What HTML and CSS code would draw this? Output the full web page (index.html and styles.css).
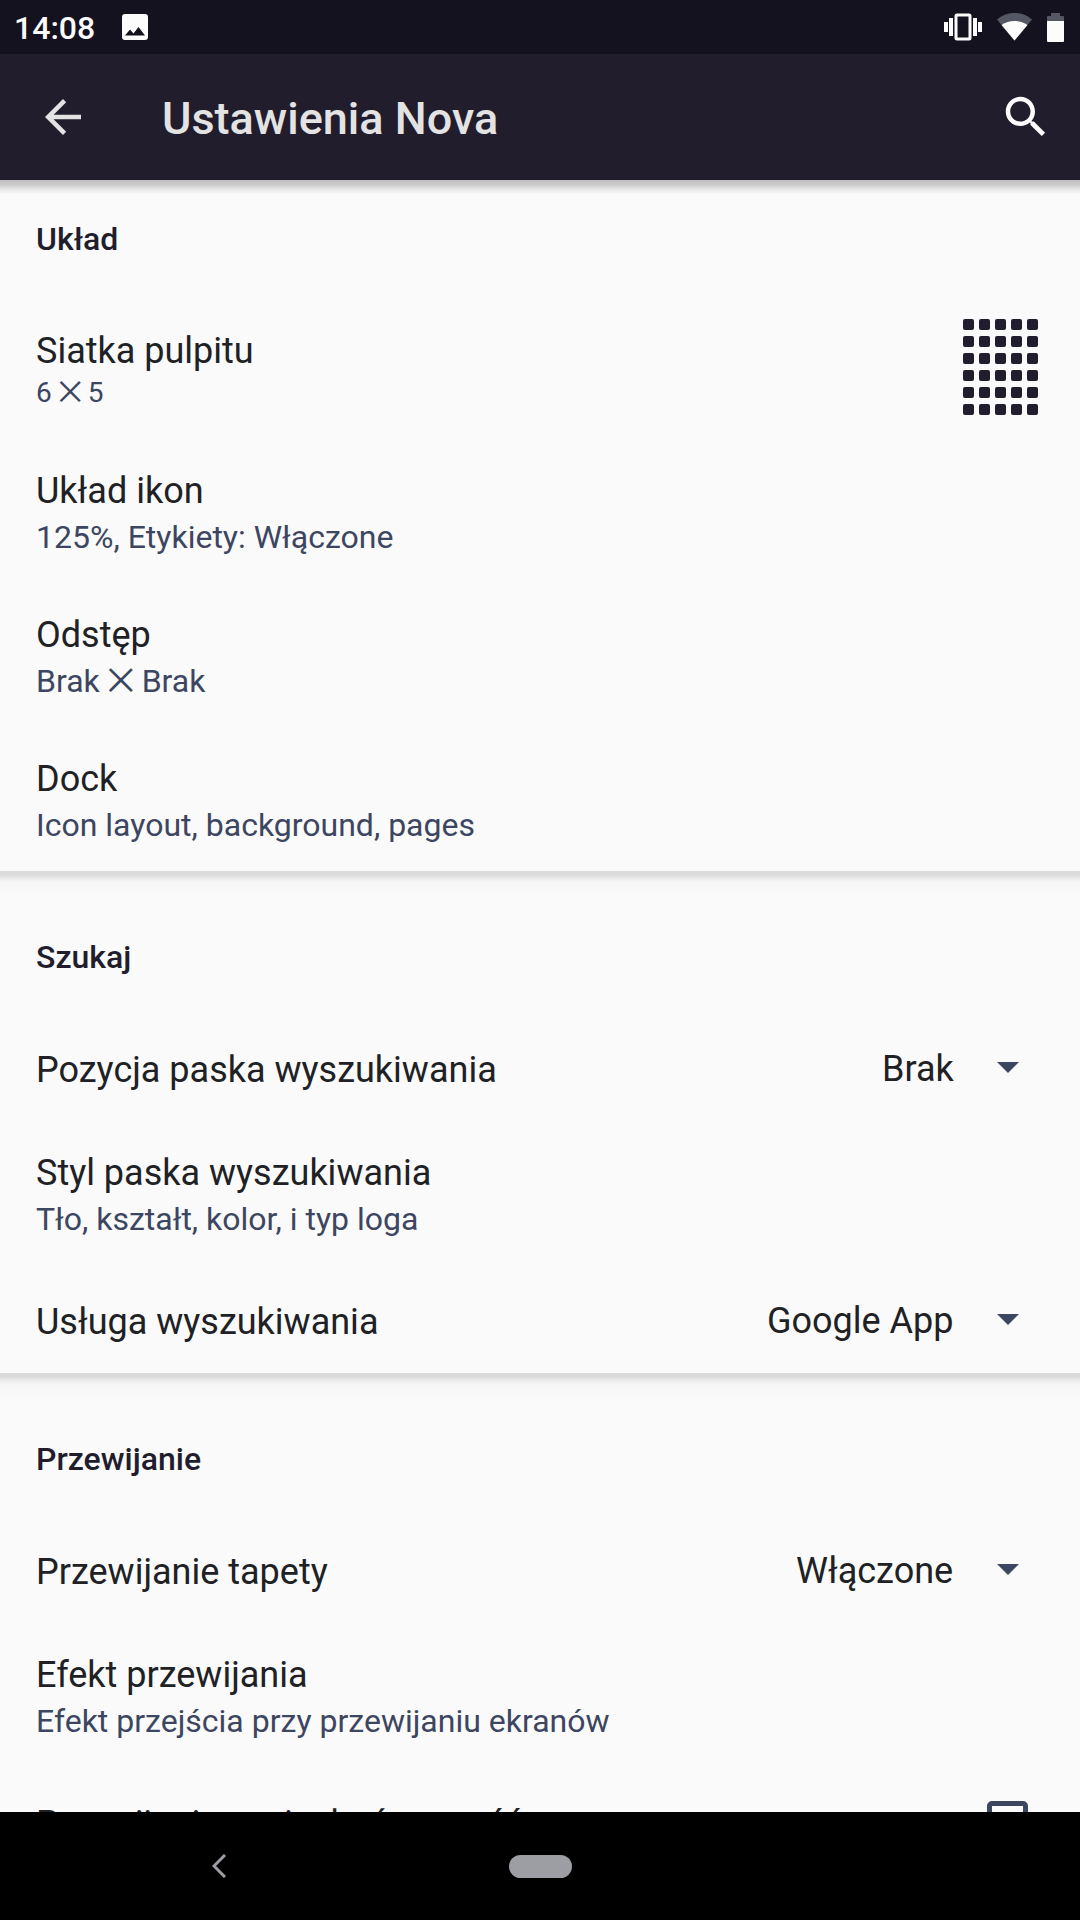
FILE: index.html
```html
<!DOCTYPE html>
<html lang="pl">
    <head>
        <meta charset="UTF-8">
        <meta name="viewport" content="width=device-width, initial-scale=1">
        <title>Ustawienia Nova</title>
        <link rel="stylesheet" href="styles.css">
    </head>

    <body>
        <div class="page">
            <div class="status">
                <span class="time">14:08</span>
                <svg class="picture" width="26" height="26" viewBox="0 0 26 26">
                    <path fill="#fcfcfc" fill-rule="evenodd" d="M3 0h20a3 3 0 0 1 3 3v20a3 3 0 0 1-3 3H3a3 3 0 0 1-3-3V3a3 3 0 0 1 3-3zM3 21.500h20l-6.500-8.500-5 6.500-3.500-4z"/>
                </svg>
                <div class="status_icons">
                    <svg width="38" height="28" viewBox="0 0 38 28" fill="#fcfcfc">
                        <rect x="0" y="9" width="4" height="10"/>
                        <rect x="5" y="5" width="4" height="18"/>
                        <rect x="12" y="2" width="14" height="24" rx="1" fill="none" stroke="#fcfcfc" stroke-width="3"/>
                        <rect x="29" y="5" width="4" height="18"/>
                        <rect x="34" y="9" width="4" height="10"/>
                    </svg>
                    <svg width="35" height="28" viewBox="0 0 35 28">
                        <path fill="#565765" d="M17.500 27.500L0 6.500C10-2.200 25-2.200 35 6.500z"/>
                        <path fill="#fcfcfc" d="M17.500 27.500L4.500 12C12 6.500 23 6.500 30.500 12z"/>
                    </svg>
                    <svg width="17" height="29" viewBox="0 0 17 29">
                        <path fill="#565765" d="M4 0h9v3h3a1 1 0 0 1 1 1v4H0V4a1 1 0 0 1 1-1h3z"/>
                        <path fill="#fcfcfc" d="M0 8h17v20a1 1 0 0 1-1 1H1a1 1 0 0 1-1-1z"/>
                    </svg>
                </div>
            </div>

            <header class="toolbar">
                <button class="icon_button" aria-label="Wstecz">
                    <svg width="54" height="54" viewBox="0 0 24 24">
                        <path fill="#e3e3e3" d="M20 11H7.830l5.590-5.590L12 4l-8 8 8 8 1.410-1.410L7.830 13H20v-2z"/>
                    </svg>
                </button>
                <h1>Ustawienia Nova</h1>
                <button class="icon_button" aria-label="Szukaj">
                    <svg width="54" height="54" viewBox="0 0 24 24">
                        <path fill="#fcfcfc" d="M15.500 14h-.79l-.28-.27C15.410 12.590 16 11.110 16 9.500 16 5.910 13.090 3 9.500 3S3 5.910 3 9.500 5.910 16 9.500 16c1.610 0 3.090-.59 4.230-1.570l.27.28v.79l5 4.990L20.490 19l-4.990-5zm-6 0C7.010 14 5 11.990 5 9.500S7.010 5 9.500 5 14 7.010 14 9.500 11.990 14 9.500 14z"/>
                    </svg>
                </button>
            </header>

            <main class="settings">
                <section>
                    <h2>Układ</h2>
                    <a class="row" href="#siatka">
                        <span class="texts">
                            <span class="name">Siatka pulpitu</span>
                            <span class="summary small">6 ⨉ 5</span>
                        </span>
                        <svg class="grid" width="75" height="96" viewBox="0 0 75 96">
                            <defs>
                                <pattern id="dots" width="16" height="17" patternUnits="userSpaceOnUse">
                                    <rect width="11" height="11" rx="2" fill="#211d2d"/>
                                </pattern>
                            </defs>
                            <rect width="75" height="96" fill="url(#dots)"/>
                        </svg>
                    </a>
                    <a class="row" href="#ikony">
                        <span class="texts">
                            <span class="name">Układ ikon</span>
                            <span class="summary">125%, Etykiety: Włączone</span>
                        </span>
                    </a>
                    <a class="row" href="#odstep">
                        <span class="texts">
                            <span class="name">Odstęp</span>
                            <span class="summary">Brak ⨉ Brak</span>
                        </span>
                    </a>
                    <a class="row" href="#dock">
                        <span class="texts">
                            <span class="name">Dock</span>
                            <span class="summary">Icon layout, background, pages</span>
                        </span>
                    </a>
                </section>

                <section>
                    <h2>Szukaj</h2>
                    <div class="row single">
                        <label class="name" for="pozycja">Pozycja paska wyszukiwania</label>
                        <select id="pozycja">
                            <option>Brak</option>
                        </select>
                        <svg class="arrow" width="22" height="11" viewBox="0 0 22 11">
                            <path fill="#3d4660" d="M0 0h22L11 11z"/>
                        </svg>
                    </div>
                    <a class="row" href="#styl">
                        <span class="texts">
                            <span class="name">Styl paska wyszukiwania</span>
                            <span class="summary">Tło, kształt, kolor, i typ loga</span>
                        </span>
                    </a>
                    <div class="row single">
                        <label class="name" for="usluga">Usługa wyszukiwania</label>
                        <select id="usluga">
                            <option>Google App</option>
                        </select>
                        <svg class="arrow" width="22" height="11" viewBox="0 0 22 11">
                            <path fill="#3d4660" d="M0 0h22L11 11z"/>
                        </svg>
                    </div>
                </section>

                <section>
                    <h2>Przewijanie</h2>
                    <div class="row single">
                        <label class="name" for="tapeta">Przewijanie tapety</label>
                        <select id="tapeta">
                            <option>Włączone</option>
                        </select>
                        <svg class="arrow" width="22" height="11" viewBox="0 0 22 11">
                            <path fill="#3d4660" d="M0 0h22L11 11z"/>
                        </svg>
                    </div>
                    <a class="row" href="#efekt">
                        <span class="texts">
                            <span class="name">Efekt przewijania</span>
                            <span class="summary">Efekt przejścia przy przewijaniu ekranów</span>
                        </span>
                    </a>
                    <div class="row single">
                        <label class="name" for="nieskonczonosc">Przewijanie w nieskończoność</label>
                        <input type="checkbox" id="nieskonczonosc">
                    </div>
                </section>
            </main>

            <nav class="navbar">
                <button class="back" aria-label="Wstecz">
                    <svg width="14" height="24" viewBox="0 0 14 24">
                        <path fill="none" stroke="#9d9da4" stroke-width="3" d="M13 1L2 12l11 11"/>
                    </svg>
                </button>
                <button class="home" aria-label="Ekran główny"></button>
            </nav>
        </div>
    </body>
</html>
```
FILE: styles.css
```css
* {
    box-sizing: border-box;
}
body {
    margin: 0;
    font-family: Roboto, "Noto Sans", sans-serif;
    background-color: #fafafa;
    color: #202124;
}
button {
    padding: 0;
    border: none;
    background: none;
}
svg {
    display: block;
}
.page {
    display: flex;
    flex-direction: column;
    height: 100vh;
}

/* status bar */
.status {
    display: flex;
    align-items: center;
    flex: none;
    height: 54px;
    padding: 0 16px 0 14px;
    background-color: #14121e;
}
.time {
    padding-top: 2px;
    font-size: 32px;
    font-weight: 500;
    color: #fcfcfc;
}
.picture {
    margin-left: 27px;
}
.status_icons {
    display: flex;
    align-items: center;
    gap: 15px;
    margin-left: auto;
}

/* toolbar */
.toolbar {
    display: flex;
    align-items: center;
    flex: none;
    height: 126px;
    padding: 0 27px 0 36px;
    background-color: #211d2d;
}
.toolbar h1 {
    flex: 1;
    margin: 0;
    padding: 3px 0 0 72px;
    font-size: 45px;
    font-weight: 500;
    color: #e3e3e3;
}

/* list */
.settings {
    flex: 1;
    min-height: 0;
    overflow-y: auto;
    scrollbar-width: none;
    background: linear-gradient(#c0c0c0 0, #cccccc 5px, #e4e4e4 9px, #fafafa 14px);
}
section + section {
    background: linear-gradient(#d9d9d9 0, #dcdcdc 4px, #e6e6e6 6px, #f6f6f6 11px, #fafafa 27px);
}
h2 {
    margin: 0;
    padding: 66px 36px 36px;
    font-size: 32px;
    line-height: 40px;
    font-weight: 500;
    color: #211d2d;
}
section:first-child h2 {
    padding-top: 39px;
}
.row {
    display: flex;
    align-items: center;
    min-height: 144px;
    padding: 0 36px;
    color: inherit;
    text-decoration: none;
}
.single {
    min-height: 108px;
}
.texts {
    flex: 1;
    padding-top: 4px;
}
.name {
    display: block;
    font-size: 36px;
    line-height: 48px;
}
.single .name {
    flex: 1;
    padding-top: 6px;
}
.summary {
    display: block;
    font-size: 32px;
    line-height: 44px;
    color: #3d4660;
}
.small {
    font-size: 28px;
    line-height: 36px;
}
.grid {
    margin-right: 6px;
}
select {
    appearance: none;
    padding: 4px 0 0;
    border: none;
    background: none;
    font-family: inherit;
    font-size: 36px;
    line-height: 48px;
    color: inherit;
}
.arrow {
    margin: 0 25px 0 43px;
}
input[type="checkbox"] {
    appearance: none;
    width: 41px;
    height: 41px;
    margin: 0 16px 0 0;
    border: 5px solid #3d4660;
    border-radius: 5px;
}

/* navigation bar */
.navbar {
    display: grid;
    grid-template-columns: 1fr 63px 1fr;
    align-items: center;
    flex: none;
    height: 108px;
    background-color: #000;
}
.back {
    justify-self: center;
    margin-right: 70px;
    padding: 20px;
}
.home {
    height: 23px;
    border-radius: 12px;
    background-color: #9d9da4;
}
```
